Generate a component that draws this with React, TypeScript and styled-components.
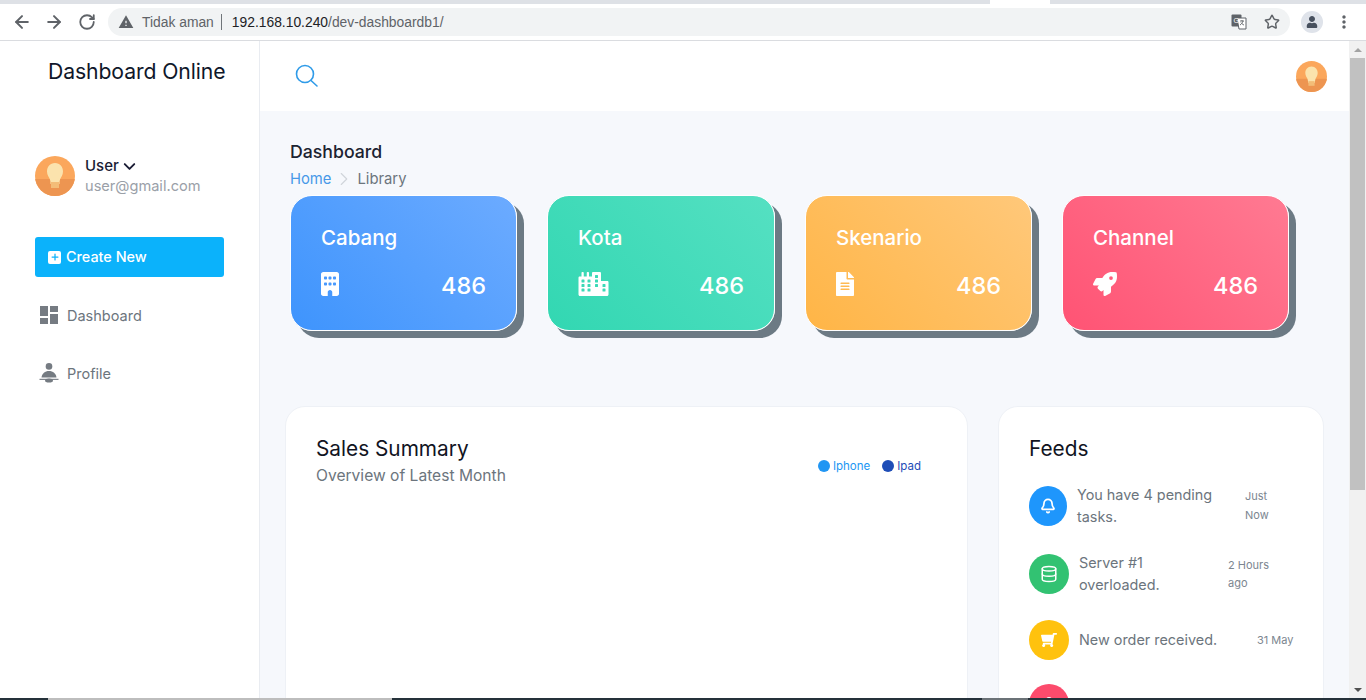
import React from "react";
import styled, { createGlobalStyle } from "styled-components";
import { ArrowLeft, ArrowRight, RotateCw, ChevronDown, ChevronRight, Plus, Star, Bell, Database } from "lucide-react";
import { FaCity, FaFileAlt, FaRocket, FaShoppingCart, FaUser } from "react-icons/fa";
import { FaBuilding } from "react-icons/fa6";
import { MdDashboard, MdWarning, MdMoreVert } from "react-icons/md";

const GlobalStyle = createGlobalStyle`
  html, body {
    margin: 0;
    padding: 0;
    height: 100%;
    overflow: hidden;
    background: #fff;
    font-family: "Inter", "Noto Sans", "Liberation Sans", sans-serif;
  }
  * { box-sizing: border-box; }
`;

const Screen = styled.div`
  width: 1366px;
  height: 700px;
  display: flex;
  flex-direction: column;
  overflow: hidden;
`;

const TabStrip = styled.div`
  height: 4px;
  flex: none;
  display: flex;
  background: #dee1e6;
`;

const ActiveTab = styled.div`
  width: 60px;
  margin-left: 990px;
  background: #fff;
`;

const BrowserBar = styled.div`
  height: 37px;
  flex: none;
  display: flex;
  align-items: center;
  background: #fff;
  border-bottom: 1px solid #dadce0;
  padding-left: 12px;
  color: #5f6368;
`;

const NavButton = styled.span<{ $pad?: number }>`
  width: 32px;
  height: 20px;
  padding-left: ${(p) => p.$pad ?? 0}px;
  display: flex;
  align-items: center;
  color: #5f6368;
`;

const AddressBar = styled.div`
  width: 1182px;
  height: 28px;
  border-radius: 14px;
  background: #f1f3f4;
  display: flex;
  align-items: center;
  padding-left: 10px;
  font-family: "Liberation Sans", Arial, sans-serif;
  font-size: 13.85px;
`;

const NotSecure = styled.span`
  margin-left: 8px;
  color: #5f6368;
  padding-right: 7px;
  border-right: 1px solid #70757a;
  line-height: 16px;
`;

const Url = styled.span`
  margin-left: 10px;
  color: #5f6368;
  b {
    font-weight: 400;
    color: #202124;
  }
`;

const AddressActions = styled.div`
  margin-left: auto;
  display: flex;
  align-items: center;
  gap: 17px;
  padding-right: 10px;
`;

const ProfileChip = styled.span`
  width: 22px;
  height: 22px;
  margin-left: 11px;
  margin-top: -1px;
  border-radius: 50%;
  background: #dfe3ea;
  display: flex;
  align-items: center;
  justify-content: center;
  color: #47505e;
`;

const MenuDots = styled.span`
  margin-left: 11px;
  display: flex;
  color: #5f6368;
`;

const Viewport = styled.div`
  flex: 1;
  min-height: 0;
  display: flex;
`;

const Sidebar = styled.aside`
  width: 260px;
  flex: none;
  background: #fff;
  border-right: 1px solid #e9ecf1;
  padding: 16px 35px 0;
`;

const Brand = styled.div`
  margin-left: 13px;
  font-size: 21.2px;
  line-height: 28px;
  font-weight: 400;
  color: #0f172a;
  letter-spacing: -0.1px;
  white-space: nowrap;
`;

const UserBlock = styled.div`
  margin-top: 71px;
  display: flex;
  align-items: center;
  gap: 10px;
`;

const UserName = styled.div`
  display: flex;
  align-items: center;
  gap: 1px;
  font-size: 15px;
  line-height: 20px;
  font-weight: 500;
  color: #1a1c34;
`;

const UserMail = styled.div`
  font-size: 14.6px;
  line-height: 20px;
  color: #9aa0a8;
`;

const CreateButton = styled.button`
  width: 189px;
  height: 40px;
  margin-top: 41px;
  border: 0;
  border-radius: 3px;
  background: #0bb2fb;
  color: #fff;
  display: flex;
  align-items: center;
  gap: 5px;
  padding: 0 13px 2px;
  font: 500 14.4px "Inter", sans-serif;
`;

const PlusBox = styled.span`
  width: 13px;
  height: 13px;
  margin-top: 2px;
  border-radius: 2px;
  background: #fff;
  color: #0bb2fb;
  display: flex;
  align-items: center;
  justify-content: center;
`;

const NavList = styled.nav`
  margin-top: 18px;
  display: flex;
  flex-direction: column;
  gap: 18px;
`;

const NavItem = styled.a`
  height: 40px;
  display: flex;
  align-items: center;
  gap: 8px;
  padding-left: 4px;
  font-size: 14.5px;
  color: #6c757d;
`;

const NavIcon = styled.span`
  width: 20px;
  height: 20px;
  flex: none;
  display: flex;
  align-items: center;
  justify-content: center;
  color: #757b82;
  svg {
    flex: none;
  }
`;

const Main = styled.main`
  flex: 1;
  min-width: 0;
  display: flex;
  flex-direction: column;
  background: #f6f8fc;
`;

const TopBar = styled.header`
  height: 70px;
  flex: none;
  background: #fff;
  display: flex;
  align-items: center;
  justify-content: space-between;
  padding: 0 22px 0 35px;
  color: #2f9be8;
`;

const Content = styled.div`
  flex: 1;
  min-height: 0;
  overflow: hidden;
  padding: 29px 25px 0 30px;
`;

const PageTitle = styled.h1`
  margin: 0;
  font-size: 17.7px;
  line-height: 24px;
  font-weight: 500;
  color: #1c2331;
`;

const Crumbs = styled.div`
  margin-top: 5px;
  display: flex;
  align-items: center;
  gap: 2px;
  height: 20px;
  font-size: 14.8px;
  line-height: 20px;
  color: #6c757d;
  a {
    color: #4798e8;
  }
  svg {
    color: #d0d4da;
  }
`;

const StatRow = styled.div`
  margin-top: 6px;
  display: flex;
  gap: 30px;
`;

const StatCard = styled.div<{ $from: string; $to: string; $w: number }>`
  width: ${(p) => p.$w}px;
  height: 136px;
  flex: none;
  border-radius: 22px;
  border: 1px solid #fff;
  padding: 28px 30px 0;
  color: #fff;
  background: linear-gradient(45deg, ${(p) => p.$from}, ${(p) => p.$to});
  box-shadow: 7px 7px 0 0 #6c7a84;
`;

const StatName = styled.div`
  font-size: 20.5px;
  line-height: 28px;
  font-weight: 500;
`;

const StatBottom = styled.div`
  margin-top: 15px;
  display: flex;
  align-items: center;
  justify-content: space-between;
`;

const StatIcon = styled.span<{ $w: number }>`
  display: flex;
  svg {
    width: ${(p) => p.$w}px;
    height: 24px;
  }
`;

const StatValue = styled.div`
  padding-top: 4px;
  font-size: 23.5px;
  line-height: 30px;
  font-weight: 500;
`;

const PanelRow = styled.div`
  margin-top: 75px;
  margin-left: -5px;
  display: flex;
  gap: 30px;
`;

const Panel = styled.section<{ $w: number }>`
  width: ${(p) => p.$w}px;
  height: 400px;
  flex: none;
  background: #fff;
  border: 1px solid #eef1f6;
  border-radius: 20px;
  padding: 28px 30px;
`;

const PanelHead = styled.div`
  display: flex;
  align-items: center;
  justify-content: space-between;
  padding-right: 16px;
`;

const PanelTitle = styled.h2`
  margin: 0;
  font-size: 20.8px;
  line-height: 28px;
  font-weight: 400;
  color: #11141f;
`;

const PanelSub = styled.div`
  margin-top: 3px;
  font-size: 15.6px;
  line-height: 20px;
  color: #6c757d;
`;

const Legend = styled.div`
  display: flex;
  gap: 12px;
  margin-top: 10px;
`;

const LegendItem = styled.span<{ $color: string }>`
  display: flex;
  align-items: center;
  gap: 3px;
  font-size: 11.5px;
  color: ${(p) => p.$color};
  &::before {
    content: "";
    width: 12px;
    height: 12px;
    border-radius: 50%;
    background: ${(p) => p.$color};
  }
`;

const FeedList = styled.div`
  margin-top: 20px;
  display: flex;
  flex-direction: column;
  gap: 24px;
`;

const FeedRow = styled.div<{ $h: number }>`
  height: ${(p) => p.$h}px;
  flex: none;
  display: flex;
  align-items: center;
`;

const FeedIcon = styled.span<{ $color: string; $w?: number }>`
  width: ${(p) => p.$w ?? 40}px;
  height: 40px;
  flex: none;
  border-radius: 50%;
  background: ${(p) => p.$color};
  color: #fff;
  display: flex;
  align-items: center;
  justify-content: center;
`;

const MirroredCart = styled(FaShoppingCart)`
  transform: scaleX(-1);
`;

const FeedText = styled.div<{ $w: number }>`
  width: ${(p) => p.$w}px;
  flex: none;
  margin-left: 10px;
  font-size: 14.4px;
  line-height: 22px;
  color: #6c757d;
`;

const FeedTime = styled.div<{ $left: number }>`
  margin-left: ${(p) => p.$left}px;
  font-size: 11px;
  line-height: 18.5px;
  color: #7c8690;
  white-space: nowrap;
`;

const ScrollBar = styled.div`
  width: 17px;
  flex: none;
  background: #f1f1f1;
  display: flex;
  flex-direction: column;
  align-items: center;
`;

const ScrollThumb = styled.div`
  width: 15px;
  height: 432px;
  background: #c1c1c1;
`;

const ScrollArrow = styled.span<{ $down?: boolean }>`
  height: 17px;
  flex: none;
  margin-top: ${(p) => (p.$down ? "auto" : "0")};
  display: flex;
  align-items: center;
  &::before {
    content: "";
    border-left: 4px solid transparent;
    border-right: 4px solid transparent;
    ${(p) => (p.$down ? "border-top: 4px solid #505050;" : "border-bottom: 4px solid #a3a3a3;")}
  }
`;

const TaskBar = styled.div`
  height: 2px;
  flex: none;
  background: linear-gradient(
    90deg,
    #25313a 48px,
    #bdbdbd 48px,
    #bdbdbd 392px,
    #25313a 392px,
    #25313a 982px,
    #6b7277 982px,
    #6b7277 1028px,
    #25313a 1028px
  );
`;

const Bulb = ({ size }: { size: number }) => (
  <svg width={size} height={size} viewBox="0 0 40 40" style={{ flex: "none", display: "block" }}>
    <defs>
      <clipPath id={`bulb${size}`}>
        <circle cx="20" cy="20" r="20" />
      </clipPath>
    </defs>
    <g clipPath={`url(#bulb${size})`}>
      <rect width="40" height="40" fill="#fba75c" />
      <rect y="23" width="40" height="17" fill="#ed9551" />
      <path d="M20 7c-5 0-8 4-8 8.500 0 3.500 2 5.500 3 8 .5 1.500.5 3 .5 4.500h9c0-1.500 0-3 .5-4.500 1-2.500 3-4.500 3-8C28 11 25 7 20 7z" fill="#fbe3ad" />
      <rect x="16" y="26" width="8" height="6" fill="#f3bd78" />
    </g>
  </svg>
);

const SearchIcon = () => (
  <svg width="24" height="24" viewBox="0 0 24 24" fill="none" stroke="currentColor" strokeWidth="1.6">
    <circle cx="10" cy="10" r="8.500" />
    <path d="M16 16.500l6 5.500" strokeLinecap="round" />
  </svg>
);

const ProfileIcon = () => (
  <svg width="20" height="20" viewBox="0 0 20 20" fill="currentColor">
    <circle cx="10" cy="3.400" r="3.300" />
    <path d="M2.500 14.500c.5-4 3.500-6.500 7.500-6.500s7 2.500 7.500 6.500z" />
    <rect x="0.500" y="15.800" width="19" height="1.100" />
    <ellipse cx="10" cy="17.500" rx="4" ry="2" />
  </svg>
);

const TranslateIcon = () => (
  <svg width="16" height="16" viewBox="0 0 16 16">
    <rect x="0.500" y="0.500" width="10" height="12" rx="1" fill="#5f6368" />
    <path d="M6 4h9v11H8z" fill="#fff" stroke="#5f6368" />
    <text x="2.500" y="9" fontSize="7" fontFamily="Liberation Sans" fill="#fff">G</text>
    <path d="M9 7h4M11 6v1M12 7c-.5 2-1.500 3-3 4M10 8.500c.5 1 1.500 2 3 2.500" stroke="#5f6368" fill="none" strokeWidth=".9" />
  </svg>
);

const stats = [
  { name: "Cabang", from: "#3e94fd", to: "#6cabff", w: 227, iconW: 18, icon: <FaBuilding /> },
  { name: "Kota", from: "#32d7b2", to: "#55e0c2", w: 228, iconW: 31, icon: <FaCity /> },
  { name: "Skenario", from: "#ffb546", to: "#ffc87a", w: 227, iconW: 18, icon: <FaFileAlt /> },
  { name: "Channel", from: "#ff5374", to: "#ff7a92", w: 227, iconW: 24, icon: <FaRocket /> },
];

export default function App() {
  return (
    <Screen>
      <GlobalStyle />
      <TabStrip>
        <ActiveTab />
      </TabStrip>
      <BrowserBar>
        <NavButton><ArrowLeft size={20} strokeWidth={2.4} /></NavButton>
        <NavButton><ArrowRight size={20} strokeWidth={2.4} /></NavButton>
        <NavButton $pad={2}><RotateCw size={18} strokeWidth={2.4} /></NavButton>
        <AddressBar>
          <MdWarning size={16} color="#5f6368" />
          <NotSecure>Tidak aman</NotSecure>
          <Url><b>192.168.10.240</b>/dev-dashboardb1/</Url>
          <AddressActions>
            <TranslateIcon />
            <Star size={16} color="#5f6368" strokeWidth={2.2} />
          </AddressActions>
        </AddressBar>
        <ProfileChip><FaUser size={12} /></ProfileChip>
        <MenuDots><MdMoreVert size={20} /></MenuDots>
      </BrowserBar>
      <Viewport>
        <Sidebar>
          <Brand>Dashboard Online</Brand>
          <UserBlock>
            <Bulb size={40} />
            <div>
              <UserName>User <ChevronDown size={19} strokeWidth={2.4} /></UserName>
              <UserMail>user@gmail.com</UserMail>
            </div>
          </UserBlock>
          <CreateButton>
            <PlusBox><Plus size={10} strokeWidth={3} /></PlusBox>
            Create New
          </CreateButton>
          <NavList>
            <NavItem><NavIcon><MdDashboard size={24} /></NavIcon> Dashboard</NavItem>
            <NavItem><NavIcon><ProfileIcon /></NavIcon> Profile</NavItem>
          </NavList>
        </Sidebar>
        <Main>
          <TopBar>
            <SearchIcon />
            <Bulb size={31} />
          </TopBar>
          <Content>
            <PageTitle>Dashboard</PageTitle>
            <Crumbs>
              <a>Home</a>
              <ChevronRight size={22} strokeWidth={1.2} />
              <span>Library</span>
            </Crumbs>
            <StatRow>
              {stats.map((s) => (
                <StatCard key={s.name} $from={s.from} $to={s.to} $w={s.w}>
                  <StatName>{s.name}</StatName>
                  <StatBottom>
                    <StatIcon $w={s.iconW}>{s.icon}</StatIcon>
                    <StatValue>486</StatValue>
                  </StatBottom>
                </StatCard>
              ))}
            </StatRow>
            <PanelRow>
              <Panel $w={683}>
                <PanelHead>
                  <div>
                    <PanelTitle>Sales Summary</PanelTitle>
                    <PanelSub>Overview of Latest Month</PanelSub>
                  </div>
                  <Legend>
                    <LegendItem $color="#2196f3">Iphone</LegendItem>
                    <LegendItem $color="#1e4db7">Ipad</LegendItem>
                  </Legend>
                </PanelHead>
              </Panel>
              <Panel $w={326}>
                <PanelTitle>Feeds</PanelTitle>
                <FeedList>
                  <FeedRow $h={45}>
                    <FeedIcon $color="#1e96fc" $w={38}><Bell size={16} strokeWidth={2.6} /></FeedIcon>
                    <FeedText $w={150}>You have 4 pending tasks.</FeedText>
                    <FeedTime $left={18}>Just<br />Now</FeedTime>
                  </FeedRow>
                  <FeedRow $h={44}>
                    <FeedIcon $color="#32c272"><Database size={18} strokeWidth={2} /></FeedIcon>
                    <FeedText $w={140}>Server #1 overloaded.</FeedText>
                    <FeedTime $left={9}>2 Hours<br />ago</FeedTime>
                  </FeedRow>
                  <FeedRow $h={40}>
                    <FeedIcon $color="#ffc20e"><MirroredCart size={16} /></FeedIcon>
                    <FeedText $w={168}>New order received.</FeedText>
                    <FeedTime $left={10}>31 May</FeedTime>
                  </FeedRow>
                  <FeedRow $h={40}>
                    <FeedIcon $color="#fc4b6c"><FaUser size={14} /></FeedIcon>
                  </FeedRow>
                </FeedList>
              </Panel>
            </PanelRow>
          </Content>
        </Main>
        <ScrollBar>
          <ScrollArrow />
          <ScrollThumb />
          <ScrollArrow $down />
        </ScrollBar>
      </Viewport>
      <TaskBar />
    </Screen>
  );
}
